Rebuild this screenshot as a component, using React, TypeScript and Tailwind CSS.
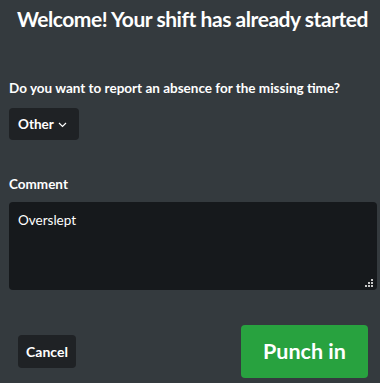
import React from "react";

export default function App() {
  const font = { fontFamily: '"Lato", "Noto Sans", sans-serif' };
  return (
    <div
      className="w-[380px] h-[383px] bg-[#343a3e] text-white flex flex-col overflow-hidden"
      style={font}
    >
      <h1 className="mt-[3px] pl-[5px] text-center text-[21px] leading-[32px] font-bold tracking-[-0.45px]">
        Welcome! Your shift has already started
      </h1>

      <div className="px-[9px] mt-[45px] flex flex-col">
        <label className="text-[13.5px] leading-[16px] font-bold">
          Do you want to report an absence for the missing time?
        </label>
        <button className="mt-[12px] w-[70px] h-[32px] rounded-[4px] bg-[#1f2225] flex items-center pl-[9px] gap-[4px] text-[13.5px] font-bold">
          Other
          <svg width="9" height="6" viewBox="0 0 9 6" fill="none" className="mt-[1px]">
            <path d="M1 1l3.5 3.5L8 1" stroke="white" strokeWidth="1.2" />
          </svg>
        </button>

        <label className="mt-[36px] text-[13.5px] leading-[16px] font-bold">Comment</label>
        <div className="relative mt-[10px] h-[88px] w-[368px] rounded-[4px] bg-[#16191c] px-[9px] pt-[8px] text-[13.5px] leading-[20px]">
          Overslept
          <svg className="absolute right-[4px] bottom-[3px]" width="8" height="8" viewBox="0 0 8 8">
            <rect x="6" y="0" width="2" height="2" fill="#c8c8c8" />
            <rect x="3" y="3" width="2" height="2" fill="#c8c8c8" />
            <rect x="6" y="3" width="2" height="2" fill="#c8c8c8" />
            <rect x="0" y="6" width="2" height="2" fill="#c8c8c8" />
            <rect x="3" y="6" width="2" height="2" fill="#c8c8c8" />
            <rect x="6" y="6" width="2" height="2" fill="#c8c8c8" />
          </svg>
        </div>
      </div>

      <div className="mt-[35px] flex items-center justify-between pl-[18px] pr-[12px]">
        <button className="w-[58px] h-[33px] rounded-[4px] bg-[#1f2225] text-[14px] font-bold">
          Cancel
        </button>
        <button className="w-[127px] h-[53px] rounded-[4px] bg-[#28a23f] text-[21.5px] font-bold">
          Punch in
        </button>
      </div>
    </div>
  );
}
